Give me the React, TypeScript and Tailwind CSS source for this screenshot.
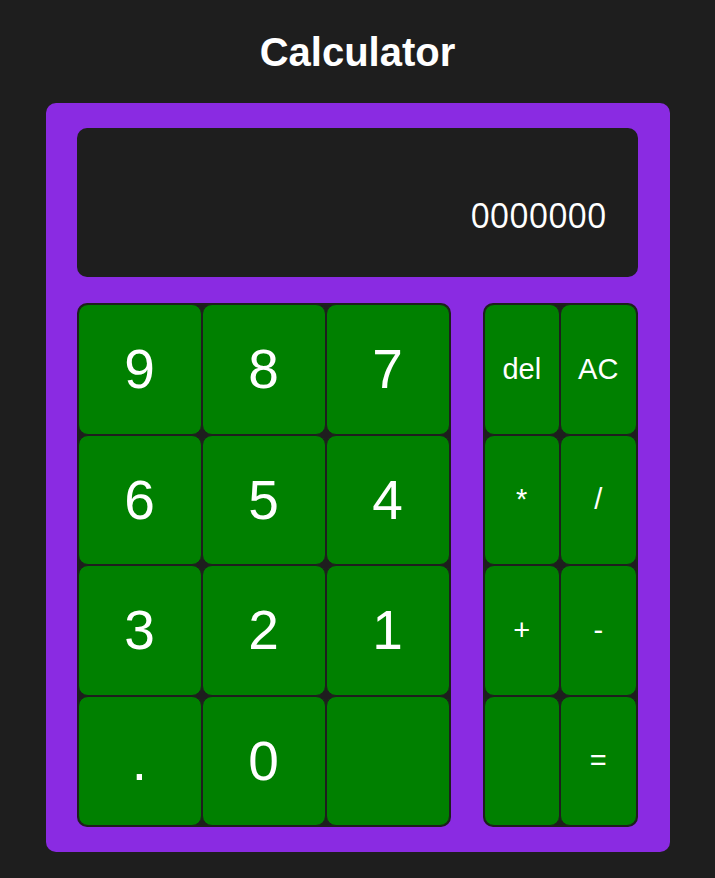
const numKeys = ['9', '8', '7', '6', '5', '4', '3', '2', '1', '.', '0', '']
const opKeys = ['del', 'AC', '*', '/', '+', '-', '', '=']

function Key({ label, big }: { label: string; big?: boolean }) {
  return (
    <button
      className={[
        'flex items-center justify-center bg-[#008000] border border-[#1e1e1e] rounded-[10px] text-white h-[130.5px]',
        big ? 'text-[55px]' : 'text-[29px]',
      ].join(' ')}
    >
      {label}
    </button>
  )
}

export default function App() {
  return (
    <div className="min-h-[878px] bg-[#1e1e1e] font-['Liberation_Sans',Arial,sans-serif] pt-[29px]">
      <h1 className="text-center text-white font-bold text-[40px] leading-[46px]">Calculator</h1>

      <div className="mt-[28px] mx-auto w-[624px] bg-[#8a2be2] rounded-[10px] pl-[31px] pr-[32px] py-[25px]">
        {/* Display */}
        <div className="h-[149px] bg-[#1e1e1e] rounded-[10px] flex items-center justify-end pr-[31px] pt-[26px]">
          <span className="text-white text-[34px] font-['Open_Sans','Noto_Sans',sans-serif]">0000000</span>
        </div>

        {/* Keypads */}
        <div className="mt-[26px] flex justify-between">
          <div className="w-[374px] grid grid-cols-3 bg-[#1e1e1e] p-px rounded-[10px]">
            {numKeys.map((k, i) => (
              <Key key={i} label={k} big />
            ))}
          </div>
          <div className="w-[155px] grid grid-cols-2 bg-[#1e1e1e] p-px rounded-[10px]">
            {opKeys.map((k, i) => (
              <Key key={i} label={k} />
            ))}
          </div>
        </div>
      </div>
    </div>
  )
}
